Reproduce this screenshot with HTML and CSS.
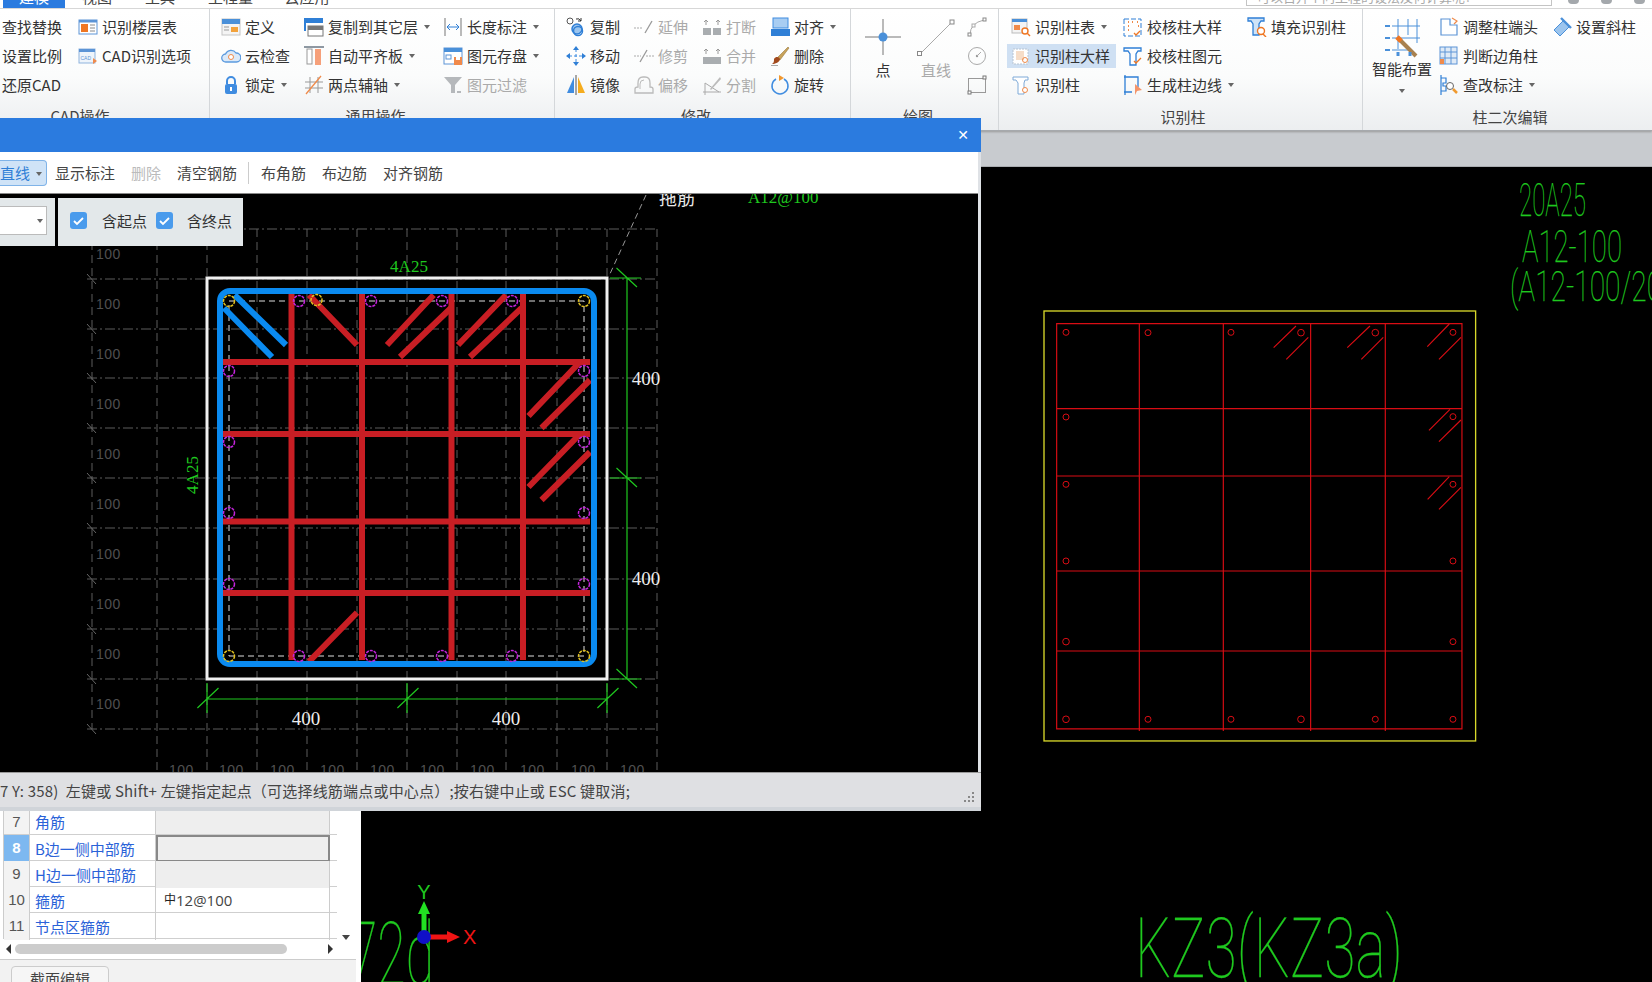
FILE: index.html
```html
<!DOCTYPE html>
<html lang="zh-CN">
<head>
<meta charset="utf-8">
<title>柱大样校核</title>
<link rel="stylesheet" href="styles.css">
</head>
<body>
<svg class="defs" width="0" height="0" aria-hidden="true">
<defs>
<symbol id="i-floor" viewBox="0 0 20 20"><rect x="1" y="3" width="18" height="14" fill="#fff" stroke="#5c94d6"/><rect x="1" y="3" width="18" height="2.5" fill="#5c94d6"/><rect x="3" y="7" width="7" height="8" fill="#ef7622"/><path d="M12 8h5M12 11h5M12 14h5" stroke="#888"/></symbol>
<symbol id="i-cadopt" viewBox="0 0 20 20"><rect x="1" y="3" width="16" height="14" fill="#eef4fb" stroke="#8fb4dd"/><rect x="1" y="3" width="16" height="3" fill="#5c94d6"/><text x="2.5" y="14" class="ico-t">CAD</text><path d="M15 12l4 3-4 3z" fill="#f08a4b"/></symbol>
<symbol id="i-def" viewBox="0 0 20 20"><rect x="1" y="2" width="18" height="16" fill="#f4f4f4" stroke="#c4c4c4"/><rect x="1" y="2" width="18" height="5" fill="#4a90d9"/><rect x="10" y="10" width="7" height="5" fill="#f2a23c"/><path d="M3 10h5M3 13h5" stroke="#999"/></symbol>
<symbol id="i-copyl" viewBox="0 0 20 20"><path d="M1 14V2h17v4" fill="none" stroke="#2f7fd6" stroke-width="2"/><rect x="2" y="3" width="15" height="3" fill="#2f7fd6"/><rect x="4" y="9" width="15" height="10" fill="#fff" stroke="#777"/><rect x="4" y="9" width="15" height="4" fill="#777"/></symbol>
<symbol id="i-len" viewBox="0 0 20 20"><path d="M2 1v18M18 1v18" stroke="#777"/><path d="M4 10h12M4 10l3-3M4 10l3 3M16 10l-3-3M16 10l-3 3" stroke="#2f7fd6" fill="none"/></symbol>
<symbol id="i-cloud" viewBox="0 0 20 20"><path d="M5 16a4 4 0 0 1-.5-8A6 6 0 0 1 15 7a4.5 4.5 0 0 1 .5 9z" fill="#dbe9f8" stroke="#5b9ade" stroke-width="1.3"/><circle cx="10" cy="11" r="2.5" fill="#fff" stroke="#ef8a4a"/></symbol>
<symbol id="i-align" viewBox="0 0 20 20"><path d="M0 1h20" stroke="#456" stroke-width="1.2"/><rect x="3" y="3" width="5" height="15" fill="#fff" stroke="#999"/><rect x="11" y="3" width="6" height="16" fill="#f6a07a"/></symbol>
<symbol id="i-save" viewBox="0 0 20 20"><rect x="1" y="2" width="18" height="16" fill="#fff" stroke="#5c94d6"/><rect x="1" y="2" width="18" height="4" fill="#4a90d9"/><rect x="3" y="9" width="5" height="4" fill="none" stroke="#5c94d6"/><rect x="11" y="11" width="8" height="8" fill="#f08a4b"/><rect x="13" y="11" width="4" height="3" fill="#fff"/></symbol>
<symbol id="i-lock" viewBox="0 0 20 20"><path d="M6 9V6a4 4 0 0 1 8 0v3" fill="none" stroke="#3f8ce0" stroke-width="2"/><rect x="4" y="9" width="12" height="10" rx="2" fill="#3f8ce0"/><rect x="9" y="12" width="2" height="4" fill="#fff"/></symbol>
<symbol id="i-axis" viewBox="0 0 20 20"><path d="M6 2v16M14 2v16M1 7h18M1 13h18" stroke="#999"/><path d="M2 19L17 1" stroke="#ef8a4a" stroke-width="1.3"/></symbol>
<symbol id="i-filter" viewBox="0 0 20 20"><path d="M1 2h18l-7 8v8h-4v-8z" fill="#b5b8bb"/><path d="M14 17h4" stroke="#b5b8bb" stroke-width="2"/></symbol>
<symbol id="i-copy" viewBox="0 0 20 20"><circle cx="4" cy="4" r="3" fill="#fff" stroke="#555"/><circle cx="11" cy="12" r="5" fill="#9cc5ee" stroke="#2f7fd6" stroke-width="1.5"/><circle cx="12" cy="14" r="4.5" fill="none" stroke="#2f7fd6" stroke-width="1.5"/><path d="M10 2a4 4 0 0 1 5 2M15 1v3h-3" fill="none" stroke="#333"/></symbol>
<symbol id="i-move" viewBox="0 0 20 20"><path d="M10 3v14M3 10h14" stroke="#3f8ce0" stroke-dasharray="3 2"/><path d="M10 0l3 4H7zM10 20l-3-4h6zM0 10l4-3v6zM20 10l-4 3V7z" fill="#2f7fd6"/></symbol>
<symbol id="i-mirror" viewBox="0 0 20 20"><path d="M8 2v16H1z" fill="#3f8ce0"/><path d="M12 2v16h7z" fill="#f5ac1e"/><path d="M10 0v20" stroke="#555"/></symbol>
<symbol id="i-ext" viewBox="0 0 20 20"><path d="M0 11h9" stroke="#aaa" stroke-dasharray="2 1"/><path d="M11 16l7-12" stroke="#999" stroke-width="1.3"/></symbol>
<symbol id="i-trim" viewBox="0 0 20 20"><path d="M0 10h7M12 10h8" stroke="#aaa" stroke-dasharray="2 1"/><path d="M6 16l7-12" stroke="#999" stroke-width="1.3"/></symbol>
<symbol id="i-offset" viewBox="0 0 20 20"><path d="M1 18v-4q0-2 3-2V8q0-6 5-6h2q5 0 5 6v4q3 0 3 2v4z" fill="none" stroke="#bbb" stroke-width="1.3"/><path d="M6 14V9q0-4 4-4" fill="none" stroke="#bbb"/></symbol>
<symbol id="i-break" viewBox="0 0 20 20"><rect x="1" y="11" width="8" height="7" fill="#a9adb0"/><rect x="11" y="11" width="8" height="7" fill="#a9adb0"/><path d="M4 8V3M16 8V3M2 5l2-2 2 2M14 5l2-2 2 2" stroke="#999" fill="none"/></symbol>
<symbol id="i-merge" viewBox="0 0 20 20"><rect x="1" y="11" width="18" height="7" fill="#a9adb0"/><path d="M4 8V3M16 8V3M2 5l2-2 2 2M14 5l2-2 2 2" stroke="#999" fill="none"/></symbol>
<symbol id="i-split" viewBox="0 0 20 20"><path d="M1 17h18M3 8v12M3 8l14 9" stroke="#aaa" fill="none"/><path d="M8 14L18 2l1 2L9 15z" fill="#bbb"/></symbol>
<symbol id="i-al2" viewBox="0 0 20 20"><rect x="3" y="1" width="15" height="10" fill="#a8cdf2" stroke="#3f8ce0"/><rect x="1" y="12" width="19" height="7" fill="#2f7fd6"/></symbol>
<symbol id="i-del" viewBox="0 0 20 20"><path d="M7 12L18 1l1 1-9 12z" fill="#c8a35a" stroke="#8d6b2d" stroke-width=".5"/><path d="M4 13c2-3 5-2 6 0 0 3-5 5-8 5 2-1 2-3 2-5z" fill="#a24a1d"/><path d="M1 20h7" stroke="#555"/></symbol>
<symbol id="i-rot" viewBox="0 0 20 20"><path d="M6 4a8 8 0 1 0 8 0" fill="none" stroke="#3f8ce0" stroke-width="1.5"/><path d="M9 0l5 3-5 3z" fill="#f0972f"/></symbol>
<symbol id="i-pt" viewBox="0 0 40 40"><path d="M20 1v36M2 19h36" stroke="#777"/><circle cx="20" cy="19" r="4.5" fill="#4a90d9"/></symbol>
<symbol id="i-line" viewBox="0 0 40 40"><path d="M4 36L36 4" stroke="#aaa"/><rect x="1.5" y="33.5" width="4" height="4" fill="#fff" stroke="#888"/><rect x="34" y="2" width="4" height="4" fill="#fff" stroke="#888"/></symbol>
<symbol id="i-arc" viewBox="0 0 20 20"><path d="M3 18Q3 6 17 3" fill="none" stroke="#aaa"/><rect x="1" y="16" width="3" height="3" fill="#fff" stroke="#888"/><rect x="16" y="1" width="3" height="3" fill="#fff" stroke="#888"/><rect x="5" y="7" width="3" height="3" fill="#fff" stroke="#aaa"/></symbol>
<symbol id="i-circ" viewBox="0 0 20 20"><circle cx="10" cy="10" r="8.5" fill="none" stroke="#aaa"/><circle cx="10" cy="10" r="1.2" fill="#999"/><path d="M10 10l4-4" stroke="#aaa"/></symbol>
<symbol id="i-rect" viewBox="0 0 20 20"><rect x="1.5" y="3.5" width="17" height="14" fill="none" stroke="#999"/><rect x="16" y="1" width="3" height="3" fill="#fff" stroke="#777"/><rect x="1" y="16" width="3" height="3" fill="#fff" stroke="#777"/></symbol>
<symbol id="i-ct" viewBox="0 0 20 20"><rect x="1" y="2" width="15" height="14" fill="#f4f4f4" stroke="#bbb"/><rect x="1" y="2" width="15" height="3" fill="#4a90d9"/><rect x="3" y="8" width="6" height="5" fill="#ef8a4a"/><circle cx="14" cy="14" r="3" fill="#fff" stroke="#ef7622" stroke-width="1.4"/><path d="M16 16l3 3" stroke="#ef7622" stroke-width="1.4"/></symbol>
<symbol id="i-cb" viewBox="0 0 20 20"><rect x="2" y="3" width="15" height="15" fill="#fff" stroke="#b7c4d2" stroke-dasharray="2 1"/><rect x="5" y="5" width="8" height="9" fill="#f6ddc8"/><circle cx="14" cy="14" r="2.5" fill="none" stroke="#ef8a4a"/></symbol>
<symbol id="i-col" viewBox="0 0 20 20"><path d="M2 2h15v3H14l-1 3v11H7V8L5 5H2z" fill="#fff" stroke="#7faad8"/><circle cx="14" cy="15" r="2.5" fill="#fff" stroke="#ef8a4a"/></symbol>
<symbol id="i-chk" viewBox="0 0 20 20"><rect x="1" y="2" width="17" height="17" fill="none" stroke="#2f7fd6" stroke-dasharray="5 2"/><path d="M5 5h1M9 5h1M14 5h1M5 9h1M15 9h1M5 13h1" stroke="#ef8a4a" stroke-width="2"/><path d="M11 16l2 2 4-4" fill="none" stroke="#ef7622" stroke-width="1.3"/></symbol>
<symbol id="i-chkc" viewBox="0 0 20 20"><path d="M1 2h17v3h-3l-2 3v11H7V8L5 5H1z" fill="#fff" stroke="#2f7fd6" stroke-width="1.3"/><path d="M11 15l2 2 5-5" fill="none" stroke="#ef7622" stroke-width="1.3"/></symbol>
<symbol id="i-edge" viewBox="0 0 20 20"><path d="M2 0v20M1 2h14v10M1 17h8" fill="none" stroke="#2f7fd6" stroke-width="1.3"/><path d="M12 9l7 6-5 1-2 4z" fill="#f4946a"/></symbol>
<symbol id="i-fill" viewBox="0 0 20 20"><path d="M1 1h16v3h-3l-2 3v11H6V7L4 4H1z" fill="#cfe3f7" stroke="#2f7fd6" stroke-width="1.3"/><circle cx="14" cy="14" r="3.5" fill="#fff" stroke="#ef7622" stroke-width="1.4"/><path d="M16 17l3 3" stroke="#ef7622" stroke-width="1.4"/></symbol>
<symbol id="i-smart" viewBox="0 0 40 40"><path d="M10 8h28M10 20h28M10 32h16M16 1v30M26 1v16M35 1v24" stroke="#4a90d9"/><path d="M3 8h5M3 20h5M3 32h5" stroke="#4a90d9" stroke-width="2"/><path d="M18 22l16 16" stroke="#a8814f" stroke-width="4"/><path d="M15 19l4 4" stroke="#ef7622" stroke-width="5"/><path d="M16 34v4M28 34v4" stroke="#4a90d9" stroke-width="3"/></symbol>
<symbol id="i-end" viewBox="0 0 20 20"><path d="M2 2h9v6h7v10H2z" fill="#fff" stroke="#5c94d6" stroke-width="1.2"/><path d="M13 1l5 3-3 3" fill="none" stroke="#ef8a4a" stroke-width="1.2"/></symbol>
<symbol id="i-corner" viewBox="0 0 20 20"><rect x="1" y="1" width="17" height="17" fill="#dfeaf6" stroke="#5c94d6"/><path d="M6 1v17M12 1v17M1 6h17M1 12h17" stroke="#5c94d6"/><rect x="1" y="13" width="4" height="5" fill="#ef8a4a"/></symbol>
<symbol id="i-mark" viewBox="0 0 20 20"><path d="M2 0v20M2 3h5v5H4v3h3v5H2" fill="none" stroke="#2f7fd6" stroke-width="1.2"/><circle cx="11" cy="11" r="3.5" fill="#fff" stroke="#666"/><path d="M14 14l4 4" stroke="#f09a2f" stroke-width="2.5"/></symbol>
<symbol id="i-slant" viewBox="0 0 20 20"><path d="M2 13L11 4l6 6-9 9z" fill="#9cc5ee" stroke="#4a90d9"/><path d="M9 1l10 10" stroke="#4a90d9" stroke-width="2.4"/></symbol>
</defs>
</svg>

<div class="app">
  <header class="tabs">
    <span class="tab tab-on"><span class="tab-t">建模</span></span>
    <span class="tab t2"><span class="tab-t">视图</span></span>
    <span class="tab t3"><span class="tab-t">工具</span></span>
    <span class="tab t4"><span class="tab-t">工程量</span></span>
    <span class="tab t5"><span class="tab-t">云应用</span></span>
    <span class="search"><span class="search-t">可以百升个问工程的设法及何计算呢?</span></span>
    <span class="winbtns"><i></i><i></i><i></i></span>
  </header>

  <section class="ribbon">
    <div class="grp g1">
      <div class="body">
        <div class="col c1a"><div class="it">查找替换</div><div class="it">设置比例</div><div class="it">还原CAD</div></div>
        <div class="col"><div class="it"><svg class="ic"><use href="#i-floor"/></svg>识别楼层表</div><div class="it"><svg class="ic"><use href="#i-cadopt"/></svg>CAD识别选项</div></div>
      </div>
      <div class="lab lab-g1">CAD操作<b class="ar"></b></div>
    </div>
    <div class="grp g2">
      <div class="body">
        <div class="col c2a"><div class="it"><svg class="ic"><use href="#i-def"/></svg>定义</div><div class="it"><svg class="ic"><use href="#i-cloud"/></svg>云检查</div><div class="it"><svg class="ic"><use href="#i-lock"/></svg>锁定<b class="ar"></b></div></div>
        <div class="col c2b"><div class="it"><svg class="ic"><use href="#i-copyl"/></svg>复制到其它层<b class="ar"></b></div><div class="it"><svg class="ic"><use href="#i-align"/></svg>自动平齐板<b class="ar"></b></div><div class="it"><svg class="ic"><use href="#i-axis"/></svg>两点辅轴<b class="ar"></b></div></div>
        <div class="col"><div class="it"><svg class="ic"><use href="#i-len"/></svg>长度标注<b class="ar"></b></div><div class="it"><svg class="ic"><use href="#i-save"/></svg>图元存盘<b class="ar"></b></div><div class="it off"><svg class="ic"><use href="#i-filter"/></svg>图元过滤</div></div>
      </div>
      <div class="lab">通用操作<b class="ar"></b></div>
    </div>
    <div class="grp g3">
      <div class="body">
        <div class="col c3"><div class="it"><svg class="ic"><use href="#i-copy"/></svg>复制</div><div class="it"><svg class="ic"><use href="#i-move"/></svg>移动</div><div class="it"><svg class="ic"><use href="#i-mirror"/></svg>镜像</div></div>
        <div class="col c3 "><div class="it off"><svg class="ic"><use href="#i-ext"/></svg>延伸</div><div class="it off"><svg class="ic"><use href="#i-trim"/></svg>修剪</div><div class="it off"><svg class="ic"><use href="#i-offset"/></svg>偏移</div></div>
        <div class="col c3"><div class="it off"><svg class="ic"><use href="#i-break"/></svg>打断</div><div class="it off"><svg class="ic"><use href="#i-merge"/></svg>合并</div><div class="it off"><svg class="ic"><use href="#i-split"/></svg>分割</div></div>
        <div class="col"><div class="it"><svg class="ic"><use href="#i-al2"/></svg>对齐<b class="ar"></b></div><div class="it"><svg class="ic"><use href="#i-del"/></svg>删除</div><div class="it"><svg class="ic"><use href="#i-rot"/></svg>旋转</div></div>
      </div>
      <div class="lab">修改<b class="ar"></b></div>
    </div>
    <div class="grp g4">
      <div class="body">
        <div class="big big-pt"><svg class="ic40"><use href="#i-pt"/></svg><span>点</span></div>
        <div class="big big-ln off"><svg class="ic40"><use href="#i-line"/></svg><span>直线</span></div>
        <div class="col"><div class="it"><svg class="ic ic-only"><use href="#i-arc"/></svg></div><div class="it"><svg class="ic ic-only"><use href="#i-circ"/></svg></div><div class="it"><svg class="ic ic-only"><use href="#i-rect"/></svg></div></div>
      </div>
      <div class="lab">绘图<b class="ar"></b></div>
    </div>
    <div class="grp g5">
      <div class="body">
        <div class="col c5a"><div class="it pad"><svg class="ic"><use href="#i-ct"/></svg>识别柱表<b class="ar"></b></div><div class="it pad sel"><svg class="ic"><use href="#i-cb"/></svg>识别柱大样</div><div class="it pad"><svg class="ic"><use href="#i-col"/></svg>识别柱</div></div>
        <div class="col c5b"><div class="it"><svg class="ic"><use href="#i-chk"/></svg>校核柱大样</div><div class="it"><svg class="ic"><use href="#i-chkc"/></svg>校核柱图元</div><div class="it"><svg class="ic"><use href="#i-edge"/></svg>生成柱边线<b class="ar"></b></div></div>
        <div class="col"><div class="it"><svg class="ic"><use href="#i-fill"/></svg>填充识别柱</div></div>
      </div>
      <div class="lab">识别柱</div>
    </div>
    <div class="grp g6">
      <div class="body">
        <div class="big big-sm"><svg class="ic40"><use href="#i-smart"/></svg><span>智能布置</span><b class="ar"></b></div>
        <div class="col c6"><div class="it"><svg class="ic"><use href="#i-end"/></svg>调整柱端头</div><div class="it"><svg class="ic"><use href="#i-corner"/></svg>判断边角柱</div><div class="it"><svg class="ic"><use href="#i-mark"/></svg>查改标注<b class="ar"></b></div></div>
        <div class="col"><div class="it"><svg class="ic"><use href="#i-slant"/></svg>设置斜柱</div></div>
      </div>
      <div class="lab">柱二次编辑</div>
    </div>
  </section>

  <div class="strip"></div>

  <main class="cad">
    <svg class="cad-svg" viewBox="0 167 1652 815" width="1652" height="815">
      <g class="cad-y">
        <text class="thin" x="1519" y="216" font-size="47" textLength="67" lengthAdjust="spacingAndGlyphs">20A25</text>
        <text class="thin" x="1522" y="262" font-size="44" textLength="100" lengthAdjust="spacingAndGlyphs">A12-100</text>
        <text class="thin" x="1510" y="301" font-size="42" textLength="176" lengthAdjust="spacingAndGlyphs">(A12-100/200)</text>
        <text class="thin" x="1135" y="977" font-size="84" textLength="268" lengthAdjust="spacingAndGlyphs">KZ3(KZ3a)</text>
        <text class="thin" x="349" y="984" font-size="87" textLength="85" lengthAdjust="spacingAndGlyphs">72d</text>
      </g>
      <g transform="translate(1030 300) scale(.3333)">
        <rect x="42" y="33" width="1295" height="1290" class="yl"/>
        <path class="rd" d="M80 71H1296V1287H80zM328 71V1293M580 71V1293M842 71V1293M1066 71V1293M80 326H1296M80 528H1296M80 813H1296M80 1053H1296"/>
        <path class="rd" d="M731 143L798 78M769 178L835 112M952 143L1020 78M994 178L1060 112M1192 140L1258 72M1227 178L1293 112M1197 391L1260 328M1227 425L1293 360M1193 598L1258 530M1227 628L1293 562"/>
        <g class="rc">
          <circle cx="108" cy="97" r="9"/><circle cx="354" cy="98" r="9"/><circle cx="603" cy="97" r="9"/><circle cx="813" cy="98" r="10"/><circle cx="1036" cy="98" r="10"/><circle cx="1269" cy="97" r="9"/>
          <circle cx="108" cy="351" r="9"/><circle cx="1269" cy="350" r="9"/><circle cx="108" cy="553" r="9"/><circle cx="1269" cy="553" r="9"/>
          <circle cx="108" cy="783" r="9"/><circle cx="1269" cy="783" r="9"/><circle cx="108" cy="1025" r="10"/><circle cx="1269" cy="1025" r="9"/>
          <circle cx="108" cy="1258" r="10"/><circle cx="354" cy="1258" r="9"/><circle cx="603" cy="1258" r="9"/><circle cx="813" cy="1258" r="10"/><circle cx="1036" cy="1258" r="9"/><circle cx="1269" cy="1258" r="9"/>
        </g>
      </g>
      <g class="axis">
        <path d="M424 937V912" stroke="#22e022" stroke-width="5"/>
        <path d="M424 901l6 13h-12z" fill="#22e022"/>
        <path d="M424 937H448" stroke="#f01414" stroke-width="5"/>
        <path d="M460 937l-13 6v-12z" fill="#f01414"/>
        <circle cx="424" cy="937" r="7" fill="#1010c8"/>
        <text class="ax-y" x="424" y="899">Y</text>
        <text class="ax-x" x="463" y="944">X</text>
      </g>
    </svg>
  </main>

  <aside class="dlg">
    <div class="dlg-title"><span class="close">✕</span></div>
    <div class="dlg-tools">
      <span class="tb-sel">直线<b class="ar"></b></span>
      <span class="tb">显示标注</span>
      <span class="tb tb-off">删除</span>
      <span class="tb">清空钢筋</span>
      <span class="tb-sep"></span>
      <span class="tb">布角筋</span>
      <span class="tb">布边筋</span>
      <span class="tb">对齐钢筋</span>
    </div>
    <div class="dlg-canvas">
      <svg class="dlg-svg" viewBox="0 194 978 578" width="978" height="578">
        <path class="gr" d="M87 229H656M87 279H656M87 329H656M87 378H656M87 428H656M87 478H656M87 528H656M87 579H656M87 629H656M87 679H656M87 729H656"/>
        <path class="gv" d="M92 229V729M157 229V772M207 229V772M257 229V772M307 229V772M357 229V772M407 229V772M457 229V772M506 229V772M557 229V772M607 229V772M657 229V772"/>
        <path class="gt" d="M87 274l9 10M87 324l9 10M87 373l9 10M87 423l9 10M87 473l9 10M87 523l9 10M87 574l9 10M87 624l9 10M87 674l9 10M87 724l9 10"/>
        <g class="t100">
          <text x="96" y="259">100</text><text x="96" y="309">100</text><text x="96" y="359">100</text><text x="96" y="409">100</text><text x="96" y="459">100</text><text x="96" y="509">100</text><text x="96" y="559">100</text><text x="96" y="609">100</text><text x="96" y="659">100</text><text x="96" y="709">100</text>
          <text x="169" y="775">100</text><text x="219" y="775">100</text><text x="270" y="775">100</text><text x="320" y="775">100</text><text x="370" y="775">100</text><text x="420" y="775">100</text><text x="470" y="775">100</text><text x="520" y="775">100</text><text x="571" y="775">100</text><text x="620" y="775">100</text>
        </g>
        <path class="lead" d="M646 195L609 276"/>
        <text class="wt-s" x="677" y="205">拖筋</text>
        <text class="gn-m" x="748" y="203">A12@100</text>
        <rect class="conc" x="207" y="278" width="400" height="401"/>
        <path class="dash" d="M229 301H584V656H229z"/>
        <path class="red" d="M291.500 293V660M362 293V660M451.500 293V660M523 293V660M222 362H590M222 434H590M222 521.500H590M222 593H590"/>
        <path class="red" d="M309 295L357 345M387 345L433.600 295M400 357L451 308M458 345L506 295M470 357L521.600 308M528.500 416L579 363M541.500 428L590 380M528.500 487L579 435M541.500 500L590 452M309 661.600L357 612.700"/>
        <path class="blue" d="M230 291H584a10 10 0 0 1 10 10V654a10 10 0 0 1-10 10H230a10 10 0 0 1-10-10V301a10 10 0 0 1 10-10z"/>
        <path class="blue" d="M224 308L272 357M234.600 295L286 345"/>
        <g class="mg">
          <circle cx="299" cy="301" r="5.500"/><circle cx="371" cy="301" r="5.500"/><circle cx="442" cy="301" r="5.500"/><circle cx="512" cy="301" r="5.500"/>
          <circle cx="229" cy="371" r="5.500"/><circle cx="584" cy="371" r="5.500"/><circle cx="229" cy="442" r="5.500"/><circle cx="584" cy="442" r="5.500"/><circle cx="229" cy="513" r="5.500"/><circle cx="584" cy="513" r="5.500"/><circle cx="229" cy="584" r="5.500"/><circle cx="584" cy="584" r="5.500"/>
          <circle cx="299" cy="656" r="5.500"/><circle cx="371" cy="656" r="5.500"/><circle cx="442" cy="656" r="5.500"/><circle cx="512" cy="656" r="5.500"/>
        </g>
        <g class="ye">
          <circle cx="229" cy="301" r="5.500"/><circle cx="584" cy="301" r="5.500"/><circle cx="229" cy="656" r="5.500"/><circle cx="584" cy="656" r="5.500"/><circle cx="316.500" cy="300" r="5.500"/>
        </g>
        <path class="dim" d="M627 278V679M610 278H641M610 478H641M610 679H641M616.500 268L637 287M616.500 468L637 487M616.500 669L637 688M207 699H607M207 683V713M407 683V713M607 683V713M197.400 708L218.500 688M397.400 708L418.500 688M597.400 708L618.500 688"/>
        <text class="gn" x="409" y="272">4A25</text>
        <text class="gn gn-r" transform="translate(198 475) rotate(-90)">4A25</text>
        <g class="wt">
          <text x="646" y="385">400</text><text x="646" y="585">400</text><text x="306" y="725">400</text><text x="506" y="725">400</text>
        </g>
      </svg>
      <div class="sub">
        <div class="sub-a"><span class="combo"><b class="ar"></b></span></div>
        <div class="sub-b">
          <svg class="cbx" viewBox="0 0 17 17"><rect width="17" height="17" rx="3" class="cbx-b"/><path d="M4 9l3 3 6-6" class="cbx-k"/></svg><span class="cl1">含起点</span>
          <svg class="cbx" viewBox="0 0 17 17"><rect width="17" height="17" rx="3" class="cbx-b"/><path d="M4 9l3 3 6-6" class="cbx-k"/></svg><span class="cl2">含终点</span>
        </div>
      </div>
    </div>
    <div class="dlg-status"><span>7 Y: 358)&nbsp; 左键或 Shift+ 左键指定起点（可选择线筋端点或中心点）;按右键中止或 ESC 键取消;</span>
      <svg class="grip" viewBox="0 0 12 12"><path d="M9 1h2v2H9zM9 5h2v2H9zM5 5h2v2H5zM9 9h2v2H9zM5 9h2v2H5zM1 9h2v2H1z"/></svg>
    </div>
  </aside>

  <aside class="props">
    <div class="tbl">
      <div class="row r7"><span class="n">7</span><span class="k">角筋</span><span class="v grey"></span></div>
      <div class="row r8"><span class="n n-on">8</span><span class="k">B边一侧中部筋</span><span class="v grey cur"></span></div>
      <div class="row r9"><span class="n">9</span><span class="k">H边一侧中部筋</span><span class="v grey"></span></div>
      <div class="row"><span class="n">10</span><span class="k">箍筋</span><span class="v"><small>中</small>12@100</span></div>
      <div class="row"><span class="n">11</span><span class="k">节点区箍筋</span><span class="v"></span></div>
    </div>
    <span class="down"></span>
    <div class="hsb"><span class="sb-l"></span><span class="thumb"></span><span class="sb-r"></span></div>
    <div class="foot"><span class="btn">截面编辑</span></div>
  </aside>
</div>
</body>
</html>
```

FILE: styles.css
```css
* { box-sizing: border-box; }
html, body { margin: 0; padding: 0; }
body { width: 1652px; height: 982px; overflow: hidden; background: #000; font-family: "Noto Sans CJK SC", "Liberation Sans", sans-serif; font-size: 15px; color: #333; }
.defs { position: absolute; }
.ico-t { font: 5px "Liberation Sans", sans-serif; fill: #5c94d6; }

.app { position: relative; width: 1652px; height: 982px; display: flex; flex-direction: column; overflow: hidden; }

.tabs { height: 9px; flex: none; display: flex; background: #fff; border-bottom: 1px solid #dcdcdc; overflow: hidden; position: relative; }
.tab { display: block; height: 9px; overflow: hidden; color: #444; font-size: 15px; line-height: 15px; text-align: center; }
.tab-t { display: block; margin-top: -11px; }
.tab-on { margin-left: 3px; width: 62px; background: #2b7bdf; color: #fff; }
.t2 { margin-left: 17px; width: 30px; }
.t3 { margin-left: 32px; width: 32px; }
.t4 { margin-left: 32px; width: 45px; }
.t5 { margin-left: 31px; width: 46px; }
.search { margin-left: 916px; width: 306px; height: 6px; border: 1px solid #c4c4c4; border-top: 0; overflow: hidden; font-size: 13px; line-height: 13px; color: #aaa; padding-left: 10px; }
.search-t { display: block; margin-top: -10px; }
.winbtns { display: flex; gap: 22px; margin-left: 16px; }
.winbtns i { display: block; width: 11px; height: 4px; background: #a4a8ac; border-radius: 0 0 5px 5px; }

.ribbon { height: 122px; flex: none; display: flex; background: linear-gradient(#fff 0, #fbfcfc 55%, #eceef0 100%); border-bottom: 1px solid #a6a9ad; box-shadow: 0 1px 2px #999; position: relative; }
.grp { flex: none; display: flex; flex-direction: column; border-right: 1px solid #d4d7da; }
.g1 { width: 210px; }
.g2 { width: 345px; }
.g3 { width: 296px; }
.g4 { width: 148px; }
.g5 { width: 364px; }
.g6 { width: 289px; border-right: 0; }
.body { height: 99px; display: flex; padding-top: 3px; }
.g1 .body { padding-left: 2px; }
.g2 .body, .g3 .body { padding-left: 11px; }
.g4 .body { padding-left: 5px; }
.g5 .body { padding-left: 8px; }
.g6 .body { padding-left: 9px; }
.lab { height: 20px; line-height: 18px; text-align: center; color: #444; }
.g1 .lab, .g2 .lab, .g3 .lab, .g4 .lab { line-height: 15px; }
.g5 .lab, .g6 .lab { padding-left: 5px; }
.lab-g1 { padding-right: 36px; }
.col { display: flex; flex-direction: column; flex: none; }
.it { height: 29px; display: flex; align-items: center; white-space: nowrap; flex: none; color: #333; }
.it.off, .big.off { color: #aaa; }
.ic { width: 20px; height: 20px; margin-right: 4px; flex: none; }
.ic-only { margin-right: 0; }
.ic40 { width: 40px; height: 40px; display: block; flex: none; }
.ar { display: inline-block; width: 0; height: 0; margin-left: 6px; border-left: 3.5px solid transparent; border-right: 3.5px solid transparent; border-top: 4px solid #666; }
.lab .ar { margin-left: 7px; }
.c1a { width: 76px; }
.c2a { width: 83px; }
.c2b { width: 139px; }
.c3 { width: 68px; }
.big { display: flex; flex-direction: column; align-items: center; padding-top: 6px; flex: none; }
.big span { line-height: 20px; margin-top: 2px; }
.big-pt { width: 54px; }
.big-ln { width: 52px; }
.g4 .col { margin-left: 5px; }
.big-sm { width: 60px; margin-right: 7px; }
.big-sm span { margin-top: 1px; white-space: nowrap; }
.big-sm .ar { margin: 10px 0 0; }
.c5a { width: 116px; }
.pad { padding-left: 4px; width: 109px; }
.sel { height: 24px; margin: 2.5px 0; background: #cfe0f3; }
.c5b { width: 124px; }
.c6 { width: 113px; }

.strip { height: 36px; flex: none; background: #c8cbcf; border-bottom: 1px solid #a9acb0; }
.cad { flex: 1; background: #000; }
.cad-svg { display: block; }
.thin { font-family: Roboto, "Liberation Sans", sans-serif; font-weight: 100; }
.cad-y { fill: #1fc81f; stroke: #1fc81f; stroke-width: .25; }
.yl { fill: none; stroke: #d8d82a; stroke-width: 4; }
.rd { fill: none; stroke: #d90d14; stroke-width: 3.5; }
.rc { fill: none; stroke: #d90d14; stroke-width: 3; }
.ax-y { font: 20px "Liberation Sans", sans-serif; fill: #1fc81f; text-anchor: middle; }
.ax-x { font: 20px "Liberation Sans", sans-serif; fill: #f01414; }

.dlg { position: absolute; left: 0; top: 118px; width: 981px; height: 693px; display: flex; flex-direction: column; background: #fff; border-right: 3px solid #dfe2e6; }
.dlg-title { height: 34px; flex: none; margin-right: -3px; background: #2b7bdf; position: relative; }
.close { position: absolute; right: 12px; top: 7px; color: #fff; font: bold 14px/20px "DejaVu Sans", sans-serif; }
.dlg-tools { height: 42px; flex: none; display: flex; align-items: center; background: #fff; border-bottom: 1px solid #888; }
.tb-sel { width: 47px; height: 26px; line-height: 24px; color: #2f7fd6; background: #cfe3f7; border: 1px solid #7fb3e8; border-left: 0; border-radius: 0 4px 4px 0; display: block; white-space: nowrap; }
.tb-sel .ar { margin-left: 6px; vertical-align: middle; }
.tb { color: #444; }
.tb-off { color: #bbb; }
.tb-sel + .tb { margin-left: 8px; }
.tb-off { margin-left: 16px; }
.tb-off + .tb { margin-left: 16px; }
.tb-sep { width: 1px; height: 22px; background: #ccc; margin: 0 12px 0 11px; }
.tb-sep + .tb + .tb { margin-left: 16px; }
.tb-sep + .tb + .tb + .tb { margin-left: 16px; }
.dlg-canvas { height: 578px; flex: none; position: relative; background: #000; overflow: hidden; }
.dlg-svg { display: block; }
.gr { fill: none; stroke: #5c5c5c; stroke-dasharray: 10 3 2 3; }
.gv { fill: none; stroke: #5c5c5c; stroke-dasharray: 8 5; }
.gt { fill: none; stroke: #666; }
.t100 { font: 14px "Liberation Sans", sans-serif; fill: #505050; letter-spacing: .5px; }
.lead { fill: none; stroke: #999; stroke-dasharray: 6 4; }
.wt-s { font-size: 18px; fill: #e8e8e8; text-anchor: middle; }
.gn-m { font: 17px "Liberation Serif", serif; fill: #1fc81f; }
.gn { font: 17px "Liberation Serif", serif; fill: #1fc81f; text-anchor: middle; }
.gn-r { text-anchor: middle; }
.wt { font: 19px "Liberation Serif", serif; fill: #eee; text-anchor: middle; }
.conc { fill: none; stroke: #f0f0f0; stroke-width: 3; }
.dash { fill: none; stroke: #ddd; stroke-dasharray: 6 4; }
.red { fill: none; stroke: #c81e24; stroke-width: 6; }
.blue { fill: none; stroke: #0a8af0; stroke-width: 6; }
.mg { fill: none; stroke: #c424dc; stroke-width: 1.5; stroke-dasharray: 3 1; }
.ye { fill: none; stroke: #e0c020; stroke-width: 1.5; stroke-dasharray: 3 1; }
.dim { fill: none; stroke: #1fc81f; stroke-width: 1.2; }

.sub { position: absolute; left: 0; top: 4px; height: 48px; display: flex; gap: 3px; }
.sub-a { width: 55px; background: #e3e8ea; padding: 8px 8px 0 0; }
.combo { display: block; height: 29px; background: #fff; border: 1px solid #bbb; border-left: 0; position: relative; }
.combo .ar { position: absolute; right: 3px; top: 12px; margin: 0; }
.sub-b { width: 185px; background: #e3e8ea; display: flex; align-items: center; padding: 0 0 3px 12px; }
.cbx { width: 17px; height: 17px; flex: none; }
.cbx-b { fill: #4a9bec; }
.cbx-k { fill: none; stroke: #fff; stroke-width: 1.8; }
.cl1 { margin: 0 9px 0 15px; }
.cl2 { margin-left: 14px; }

.dlg-status { height: 39px; flex: none; display: flex; align-items: center; background: #dfe0e3; border-bottom: 4px solid #d0d4d9; border-top: 1px solid #999; color: #444; margin-right: -3px; position: relative; white-space: nowrap; font-size: 15px; letter-spacing: .2px; }
.grip { position: absolute; right: 6px; bottom: 4px; width: 12px; height: 12px; fill: #888; }

.props { position: absolute; left: 0; top: 811px; width: 361px; height: 171px; background: #fff; border-right: 4px solid #fff; }
.tbl { margin-left: 3px; width: 334px; border-left: 1px solid #ccc; }
.row { height: 26px; display: grid; grid-template-columns: 26px 126px 174px; border-bottom: 1px solid #cfcfcf; }
.r7 { height: 24px; }
.n { line-height: 26px; text-align: center; color: #555; background: #f3f3f3; border-right: 1px solid #ccc; font-family: "Liberation Sans", sans-serif; font-size: 15px; }
.n-on { background: #7db8f0; color: #fff; font-weight: bold; }
.k { line-height: 27px; padding-left: 5px; color: #2a62d8; border-right: 1px solid #ccc; white-space: nowrap; }
.r7 .k, .r7 .n { line-height: 22px; }
.v { font: 15px/26px "Open Sans", sans-serif; padding-left: 8px; color: #444; border-right: 1px solid #ccc; }
.v small { font: 12px/16px "Noto Sans CJK SC", sans-serif; color: #222; vertical-align: 2px; }
.grey { background: #eee; }
.cur { border: 2px solid #888; }
.down { position: absolute; left: 342px; top: 124px; border-left: 4.500px solid transparent; border-right: 4.500px solid transparent; border-top: 5px solid #444; }
.hsb { height: 21px; margin-top: 0; display: flex; align-items: center; width: 356px; border-bottom: 1px solid #ccc; padding-left: 6px; }
.sb-l, .sb-r { width: 0; height: 0; border-top: 5px solid transparent; border-bottom: 5px solid transparent; }
.sb-l { border-right: 5px solid #333; }
.sb-r { border-left: 5px solid #333; margin-left: 41px; }
.thumb { width: 272px; height: 10px; margin-left: 4px; background: #ccc; border-radius: 5px; }
.foot { height: 26px; width: 356px; background: #f2f2f2; padding: 6px 0 0 11px; overflow: hidden; }
.btn { display: block; width: 98px; height: 30px; text-align: center; line-height: 24px; background: #f6f6f6; border: 1px solid #ccc; border-radius: 4px; color: #444; }
```
